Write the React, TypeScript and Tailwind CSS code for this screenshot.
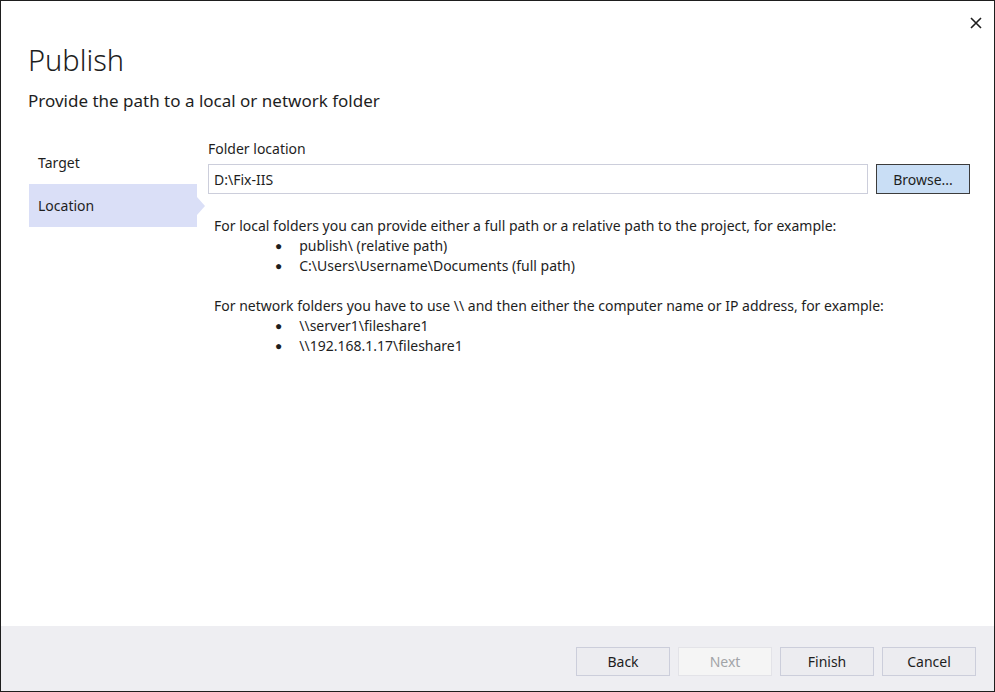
import React from "react";

const font = { fontFamily: '"Segoe UI", "Noto Sans", sans-serif' };

function FooterButton({ label, disabled }: { label: string; disabled?: boolean }) {
  return (
    <button
      type="button"
      disabled={disabled}
      className={
        disabled
          ? "h-[29px] w-[94px] border border-[#e3e3e8] bg-[#f5f5f5] text-[14px] text-[#a2a4a8]"
          : "h-[29px] w-[94px] border border-[#cccedb] bg-[#ececf0] text-[14px] text-[#1e1e1e]"
      }
    >
      {label}
    </button>
  );
}

export default function App() {
  return (
    <div
      className="flex h-[692px] w-[995px] flex-col border border-[#1e1e1e] bg-white text-[#1e1e1e]"
      style={font}
    >
      <div className="relative flex flex-1 flex-col">
        {/* close */}
        <button type="button" className="absolute right-[10px] top-[14px] flex h-4 w-4 items-center justify-center">
          <svg width="12" height="12" viewBox="0 0 12 12">
            <path d="M1 1 L11 11 M11 1 L1 11" stroke="#1e1e1e" strokeWidth="1.6" />
          </svg>
        </button>

        <h1 className="ml-[27px] mt-[40px] text-[29px] font-light leading-[38px]">Publish</h1>
        <p className="ml-[27px] mt-[11px] text-[17px] leading-[22px]">Provide the path to a local or network folder</p>

        <div className="mt-[18px] flex">
          {/* sidebar */}
          <div className="ml-[28px] flex w-[168px] flex-col pt-[11px]">
            <div className="flex h-[43px] items-center pl-[9px] text-[14px]">Target</div>
            <div className="relative flex h-[43px] items-center bg-[#dadff7] pl-[9px] text-[14px]">
              Location
              <span className="absolute left-full top-1/2 -translate-y-1/2 border-y-[9px] border-l-[8px] border-y-transparent border-l-[#dadff7]" />
            </div>
          </div>

          {/* content */}
          <div className="ml-[11px] flex flex-1 flex-col pr-[24px] pt-[9px]">
            <label className="text-[14px] leading-[20px]">Folder location</label>
            <div className="mt-[5px] flex gap-[8px]">
              <div className="flex h-[30px] flex-1 items-center border border-[#cccedb] px-[5px] text-[14px]">D:\Fix-IIS</div>
              <button type="button" className="h-[30px] w-[94px] border border-[#3c3c3c] bg-[#c9def5] text-[14px]">
                Browse...
              </button>
            </div>

            <div className="ml-[6px] mt-[22px] text-[14px] leading-[20px]">
              <p>For local folders you can provide either a full path or a relative path to the project, for example:</p>
              <ul className="ml-[61px]">
                <li className="flex gap-[17px]"><span className="text-[12px]">●</span>publish\ (relative path)</li>
                <li className="flex gap-[17px]"><span className="text-[12px]">●</span>C:\Users\Username\Documents (full path)</li>
              </ul>
              <p className="mt-[20px]">For network folders you have to use \\ and then either the computer name or IP address, for example:</p>
              <ul className="ml-[61px]">
                <li className="flex gap-[17px]"><span className="text-[12px]">●</span>\\server1\fileshare1</li>
                <li className="flex gap-[17px]"><span className="text-[12px]">●</span>\\192.168.1.17\fileshare1</li>
              </ul>
            </div>
          </div>
        </div>
      </div>

      {/* footer */}
      <div className="flex h-[65px] items-start justify-end gap-[8px] bg-[#eeeef2] pr-[18px] pt-[21px]">
        <FooterButton label="Back" />
        <FooterButton label="Next" disabled />
        <FooterButton label="Finish" />
        <FooterButton label="Cancel" />
      </div>
    </div>
  );
}
